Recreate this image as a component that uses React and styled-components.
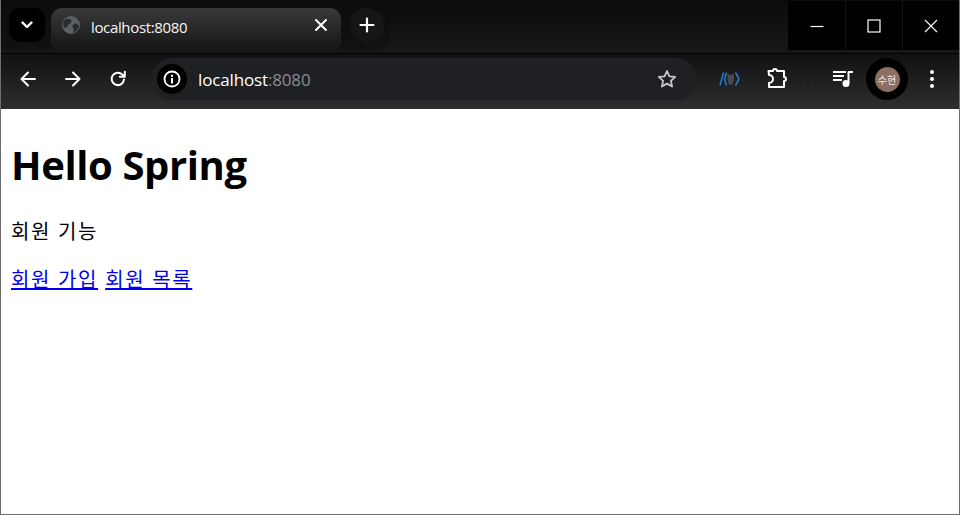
import React from "react";
import styled, { createGlobalStyle } from "styled-components";

const Global = createGlobalStyle`
  html, body { margin: 0; padding: 0; background: #fff; overflow: hidden; }
  * { box-sizing: border-box; }
`;

const Frame = styled.div`
  width: 960px;
  height: 515px;
  display: flex;
  flex-direction: column;
  border-left: 1px solid #6e6e6e;
  border-right: 1px solid #6e6e6e;
  border-bottom: 1px solid #6e6e6e;
  font-family: "Noto Sans CJK KR", "Noto Sans", sans-serif;
`;

const TitleBar = styled.div`
  height: 54px;
  flex: none;
  display: flex;
  align-items: flex-start;
  background: linear-gradient(#0c0c0c, #171717);
  border-bottom: 1px solid #000;
`;

const TabStrip = styled.div`
  display: flex;
  align-items: flex-start;
  height: 50px;
  padding-left: 8px;
  background: linear-gradient(#0c0c0c, #111);
  border-bottom-right-radius: 14px;
`;

const TabSearch = styled.button`
  width: 36px;
  height: 34px;
  margin-top: 8px;
  padding: 0;
  border: 0;
  border-radius: 11px;
  background: #000;
  color: #fff;
  display: flex;
  align-items: center;
  justify-content: center;
`;

const Tab = styled.div`
  width: 290px;
  height: 42px;
  margin-top: 8px;
  margin-left: 6px;
  padding: 0 13px 8px 11px;
  border-radius: 11px 11px 8px 8px;
  background: linear-gradient(#3a3a3a, #191919 90%);
  display: flex;
  align-items: center;
  color: #fff;
`;

const TabTitle = styled.span`
  flex: 1;
  margin-left: 11px;
  margin-top: 3px;
  font-family: "Open Sans", "Noto Sans", sans-serif;
  font-size: 15px;
  letter-spacing: -0.35px;
  color: #f4f4f4;
`;

const NewTab = styled.button`
  width: 34px;
  height: 34px;
  margin: 8px 6px 0 9px;
  padding: 0;
  border: 0;
  border-radius: 50%;
  background: #161616;
  display: flex;
  align-items: center;
  justify-content: center;
`;

const Spacer = styled.div`
  flex: 1;
`;

const WindowControls = styled.div`
  display: flex;
  height: 49px;
  margin-top: 1px;
  gap: 1px;
  background: #141414;
`;

const WindowButton = styled.button`
  width: 56px;
  height: 100%;
  padding: 0;
  border: 0;
  background: #000;
  display: flex;
  align-items: center;
  justify-content: center;
  &:first-child { width: 57px; }
`;

const Toolbar = styled.div`
  height: 55px;
  flex: none;
  display: flex;
  align-items: center;
  padding: 0 0 5px 9px;
  background: linear-gradient(#111, #2e2e2e);
`;

const NavButton = styled.button`
  width: 36px;
  height: 36px;
  margin-right: 9px;
  padding: 0;
  border: 0;
  background: transparent;
  display: flex;
  align-items: center;
  justify-content: center;
`;

const Omnibox = styled.div`
  width: 546px;
  height: 42px;
  margin-left: 6px;
  padding: 0 15px 0 6px;
  border-radius: 21px;
  background: #1f2024;
  display: flex;
  align-items: center;
`;

const InfoChip = styled.div`
  width: 30px;
  height: 30px;
  border-radius: 50%;
  background: #000;
  display: flex;
  align-items: center;
  justify-content: center;
`;

const Url = styled.span`
  flex: 1;
  margin-left: 11px;
  font-family: "Open Sans", "Noto Sans", sans-serif;
  font-size: 17px;
  letter-spacing: -0.15px;
  color: #fff;
`;

const Port = styled.span`
  color: #8a8b8e;
`;

const StarButton = styled.div`
  width: 30px;
  height: 30px;
  display: flex;
  align-items: center;
  justify-content: center;
`;

const ExtensionSlot = styled.div`
  width: ${(p) => p.$w}px;
  height: 42px;
  flex: none;
  margin-left: ${(p) => p.$ml || 0}px;
  display: flex;
  align-items: center;
  justify-content: center;
`;

const Divider = styled.div`
  width: 2px;
  height: 22px;
  flex: none;
  margin: 0 13px 0 8px;
  background: #1c1c1c;
`;

const ProfileRing = styled.div`
  width: 42px;
  height: 42px;
  flex: none;
  margin-left: 2px;
  border-radius: 50%;
  background: #000;
  display: flex;
  align-items: center;
  justify-content: center;
`;

const Avatar = styled.div`
  width: 25px;
  height: 25px;
  border-radius: 50%;
  background: #8d6e63;
  color: #f3ece9;
  font-size: 10px;
  line-height: 25px;
  text-align: center;
`;

const Page = styled.main`
  flex: 1;
  background: #fff;
  color: #000;
  padding: 10px;
`;

const Heading = styled.h1`
  margin: 23.8px 0 31px;
  font-size: 40px;
  line-height: 43px;
  font-weight: 700;
  font-family: "Open Sans", "Noto Sans", sans-serif;
  letter-spacing: -0.4px;
`;

const Para = styled.p`
  margin: 20px 0;
  font-size: 20px;
  line-height: 28px;
  letter-spacing: 1.6px;
  word-spacing: 1px;
`;

const LinkText = styled.a`
  color: #00e;
  text-decoration: underline;
`;

const stroke = { fill: "none", stroke: "#fff", strokeWidth: 2, strokeLinecap: "round", strokeLinejoin: "round" };

export default function App() {
  return (
    <Frame>
      <Global />
      <TitleBar>
        <TabStrip>
          <TabSearch aria-label="탭 검색">
            <svg width="14" height="10" viewBox="0 0 14 10"><path d="M2.500 2.500 7 7l4.500-4.500" {...stroke} strokeWidth="2.400" /></svg>
          </TabSearch>
          <Tab>
            <svg width="18" height="18" viewBox="0 0 18 18">
              <circle cx="9" cy="9" r="9" fill="#5c5f64" />
              <path d="M3 3.500C6 2 9 3 9.500 5s-2 2.500-3 3.500S5 12 3.500 12 1 9 1 7.500 2 4.500 3 3.500ZM17 10c-1-2-3-3-5-2s-2 3-1 4 1 3 0 5c3-1 5-4 6-7Z" fill="#2b2c2f" />
            </svg>
            <TabTitle>localhost:8080</TabTitle>
            <svg width="14" height="14" viewBox="0 0 14 14"><path d="M2 2l10 10M12 2 2 12" {...stroke} /></svg>
          </Tab>
          <NewTab aria-label="새 탭">
            <svg width="16" height="16" viewBox="0 0 16 16"><path d="M8 1.500v13M1.500 8h13" {...stroke} strokeWidth="2.200" /></svg>
          </NewTab>
        </TabStrip>
        <Spacer />
        <WindowControls>
          <WindowButton aria-label="최소화">
            <svg width="14" height="14" viewBox="0 0 14 14"><path d="M0.500 7.500h13" stroke="#fff" strokeWidth="1.200" /></svg>
          </WindowButton>
          <WindowButton aria-label="최대화">
            <svg width="14" height="14" viewBox="0 0 14 14"><rect x="1" y="1" width="12" height="12" fill="none" stroke="#fff" strokeWidth="1.200" /></svg>
          </WindowButton>
          <WindowButton aria-label="닫기">
            <svg width="14" height="14" viewBox="0 0 14 14"><path d="M1 1l12 12M13 1 1 13" stroke="#fff" strokeWidth="1.100" /></svg>
          </WindowButton>
        </WindowControls>
      </TitleBar>
      <Toolbar>
        <NavButton aria-label="뒤로">
          <svg width="18" height="18" viewBox="0 0 18 18"><path d="M16 9H2.500M9 2.500 2.500 9 9 15.500" {...stroke} /></svg>
        </NavButton>
        <NavButton aria-label="앞으로">
          <svg width="18" height="18" viewBox="0 0 18 18"><path d="M2 9h13.500M9 2.500 15.500 9 9 15.500" {...stroke} /></svg>
        </NavButton>
        <NavButton aria-label="새로고침">
          <svg width="18" height="18" viewBox="0 0 18 18"><path d="M15 9.500A6.200 6.200 0 1 1 13.300 4.600L15.500 6.500M15.800 1.800v5h-5" {...stroke} /></svg>
        </NavButton>
        <Omnibox>
          <InfoChip>
            <svg width="18" height="18" viewBox="0 0 18 18">
              <circle cx="9" cy="9" r="7.500" fill="none" stroke="#fff" strokeWidth="1.800" />
              <rect x="8" y="8" width="2" height="5.500" fill="#fff" />
              <rect x="8" y="4.800" width="2" height="2" fill="#fff" />
            </svg>
          </InfoChip>
          <Url>localhost<Port>:8080</Port></Url>
          <StarButton>
            <svg width="20" height="20" viewBox="0 0 20 20"><path d="M10 2l2.400 5.300 5.800.6-4.300 3.900 1.200 5.700L10 14.600l-5.100 2.900 1.200-5.700L1.800 7.900l5.800-.6L10 2Z" fill="none" stroke="#c8c8c8" strokeWidth="1.800" strokeLinejoin="round" /></svg>
          </StarButton>
        </Omnibox>
        <ExtensionSlot $w={46} $ml={10}>
          <svg width="22" height="16" viewBox="0 0 22 16">
            <path d="M1 14.500 4.500 1.500M7.500 1.500 5.500 8l2 6.500M16.500 1.500 20 8l-3.500 6.500" fill="none" stroke="#2277d0" strokeWidth="1.600" />
            <path d="M8.500 2.500l2.500 1.500h1.500l2.500-1.500v6.500l-1.500 4.500h-3.500L8.500 9Z" fill="#4a4a4a" />
          </svg>
        </ExtensionSlot>
        <ExtensionSlot $w={46}>
          <svg width="24" height="24" viewBox="0 0 24 24">
            <path d="M4.500 4H9a2 2 0 0 1 4 0h7v6a2 2 0 0 1 0 4v6H5v-4a4 4 0 0 0 0-8Z" {...stroke} strokeWidth="2" />
          </svg>
        </ExtensionSlot>
        <Divider />
        <ExtensionSlot $w={42}>
          <svg width="22" height="18" viewBox="0 0 22 18">
            <path d="M1 2h13M1 6h11M1 10h9" {...stroke} strokeLinecap="butt" strokeWidth="2" />
            <path d="M16.500 13V2H21" {...stroke} strokeLinecap="butt" strokeWidth="2" />
            <circle cx="14" cy="13.500" r="3.500" fill="#fff" />
          </svg>
        </ExtensionSlot>
        <ProfileRing>
          <Avatar>수현</Avatar>
        </ProfileRing>
        <ExtensionSlot $w={48}>
          <svg width="6" height="20" viewBox="0 0 6 20">
            <circle cx="3" cy="3" r="2" fill="#fff" />
            <circle cx="3" cy="10" r="2" fill="#fff" />
            <circle cx="3" cy="17" r="2" fill="#fff" />
          </svg>
        </ExtensionSlot>
      </Toolbar>
      <Page>
        <Heading>Hello Spring</Heading>
        <Para>회원 기능</Para>
        <Para>
          <LinkText href="#">회원 가입</LinkText> <LinkText href="#">회원 목록</LinkText>
        </Para>
      </Page>
    </Frame>
  );
}
